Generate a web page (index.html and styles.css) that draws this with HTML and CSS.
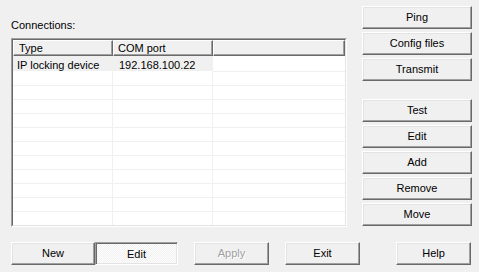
FILE: index.html
```html
<!DOCTYPE html>
<html>
<head>
<meta charset="utf-8">
<link rel="stylesheet" href="styles.css">
</head>
<body>
<div class="dialog">
  <div class="main">
    <div class="left">
      <div class="label">Connections:</div>
      <div class="listview">
        <div class="lv-inner">
          <div class="lv-header">
            <div class="hcell c1">Type</div>
            <div class="hcell c2">COM port</div>
            <div class="hcell c3"></div>
          </div>
          <div class="lv-body">
            <div class="row first sel"><div class="cell c1">IP locking device</div><div class="cell c2">192.168.100.22</div><div class="cell c3"></div></div>
            <div class="row"><div class="cell c1"></div><div class="cell c2"></div><div class="cell c3"></div></div>
            <div class="row"><div class="cell c1"></div><div class="cell c2"></div><div class="cell c3"></div></div>
            <div class="row"><div class="cell c1"></div><div class="cell c2"></div><div class="cell c3"></div></div>
            <div class="row"><div class="cell c1"></div><div class="cell c2"></div><div class="cell c3"></div></div>
            <div class="row"><div class="cell c1"></div><div class="cell c2"></div><div class="cell c3"></div></div>
            <div class="row"><div class="cell c1"></div><div class="cell c2"></div><div class="cell c3"></div></div>
            <div class="row"><div class="cell c1"></div><div class="cell c2"></div><div class="cell c3"></div></div>
            <div class="row"><div class="cell c1"></div><div class="cell c2"></div><div class="cell c3"></div></div>
            <div class="row"><div class="cell c1"></div><div class="cell c2"></div><div class="cell c3"></div></div>
            <div class="row"><div class="cell c1"></div><div class="cell c2"></div><div class="cell c3"></div></div>
            <div class="row last"><div class="cell c1"></div><div class="cell c2"></div><div class="cell c3"></div></div>
          </div>
        </div>
      </div>
    </div>
    <div class="right">
      <div class="group">
        <button class="btn side">Ping</button>
        <button class="btn side">Config files</button>
        <button class="btn side">Transmit</button>
      </div>
      <div class="group second">
        <button class="btn side">Test</button>
        <button class="btn side">Edit</button>
        <button class="btn side">Add</button>
        <button class="btn side">Remove</button>
        <button class="btn side">Move</button>
      </div>
    </div>
  </div>
  <div class="bottom">
    <button class="btn wide">New</button>
    <button class="btn wide2 pressed">Edit</button>
    <button class="btn small apply" disabled>Apply</button>
    <button class="btn small exit">Exit</button>
    <button class="btn small help">Help</button>
  </div>
</div>
</body>
</html>
```

FILE: styles.css
```css
* { box-sizing: border-box; }
html, body { margin: 0; padding: 0; background: #f0f0f0; }
body {
  font-family: "Liberation Sans", Arial, sans-serif;
  font-size: 11px;
  color: #000;
}
.dialog {
  width: 479px;
  height: 272px;
  background: #f0f0f0;
  overflow: hidden;
}
.main { display: flex; }
.left {
  width: 347px;
  padding-left: 11px;
  padding-top: 19px;
}
.label {
  line-height: 13px;
  height: 13px;
  margin-bottom: 6px;
}
.listview {
  width: 336px;
  height: 189px;
  border: 1px solid;
  border-color: #a0a0a0 #fff #fff #a0a0a0;
  background: #fff;
}
.lv-inner {
  height: 100%;
  border: 1px solid;
  border-color: #696969 #e3e3e3 #e3e3e3 #696969;
  background: #fff;
  overflow: hidden;
}
.lv-header {
  display: flex;
  height: 16px;
}
.hcell {
  height: 16px;
  line-height: 15px;
  background: #f0f0f0;
  border-top: 1px solid #fff;
  border-left: 1px solid #fff;
  border-right: 1px solid #696969;
  border-bottom: 1px solid #696969;
  box-shadow: inset -1px -1px #a0a0a0;
  white-space: nowrap;
}
.hcell.c1 { width: 100px; padding-left: 5px; }
.hcell.c2 { width: 100px; padding-left: 4px; }
.hcell.c3 { flex: 1; }
.row {
  display: flex;
  height: 14px;
}
.row.first { height: 16px; }
.cell {
  height: 100%;
  border-bottom: 1px solid #f0f0f0;
  border-right: 1px solid #f0f0f0;
  line-height: 14px;
  white-space: nowrap;
}
.row.first .cell { padding-top: 2px; }
.cell.c1 { width: 100px; padding-left: 4px; }
.cell.c2 { width: 100px; padding-left: 6px; }
.cell.c3 { flex: 1; border-right: none; }
.row.sel .c1, .row.sel .c2 { background: #f0f0f0; border-bottom-color: #fff; }
.row.last .cell { border-bottom: none; }

.right {
  width: 110px;
  margin-left: 15px;
  padding-top: 6px;
}
.group { display: flex; flex-direction: column; gap: 3px; }
.group.second { margin-top: 18px; }

.btn {
  font-family: "Liberation Sans", Arial, sans-serif;
  font-size: 11px;
  color: #000;
  background: #f0f0f0;
  height: 23px;
  padding: 0;
  margin: 0;
  border: 1px solid;
  border-color: #fff #696969 #696969 #fff;
  box-shadow: inset -1px -1px #a0a0a0, inset 1px 1px #e3e3e3;
  border-radius: 0;
  line-height: 21px;
  text-align: center;
}
.btn.side { width: 110px; }
.bottom {
  display: flex;
  padding-left: 11px;
  margin-top: 15px;
}
.btn.wide { width: 84px; }
.btn.wide2 { width: 83px; }
.btn.small { width: 75px; }
.btn.apply { margin-left: 16px; color: #a0a0a0; text-shadow: 1px 1px 0 #fff; }
.btn.exit { margin-left: 16px; }
.btn.help { margin-left: 36px; }
.btn.pressed {
  border-color: #a0a0a0 #fff #fff #a0a0a0;
  box-shadow: inset 1px 1px #696969, inset -1px -1px #e3e3e3;
  background: repeating-conic-gradient(#fff 0 25%, #f0f0f0 0 50%) 0 0 / 2px 2px;
  line-height: 20px;
  padding-top: 1px;
}
```
